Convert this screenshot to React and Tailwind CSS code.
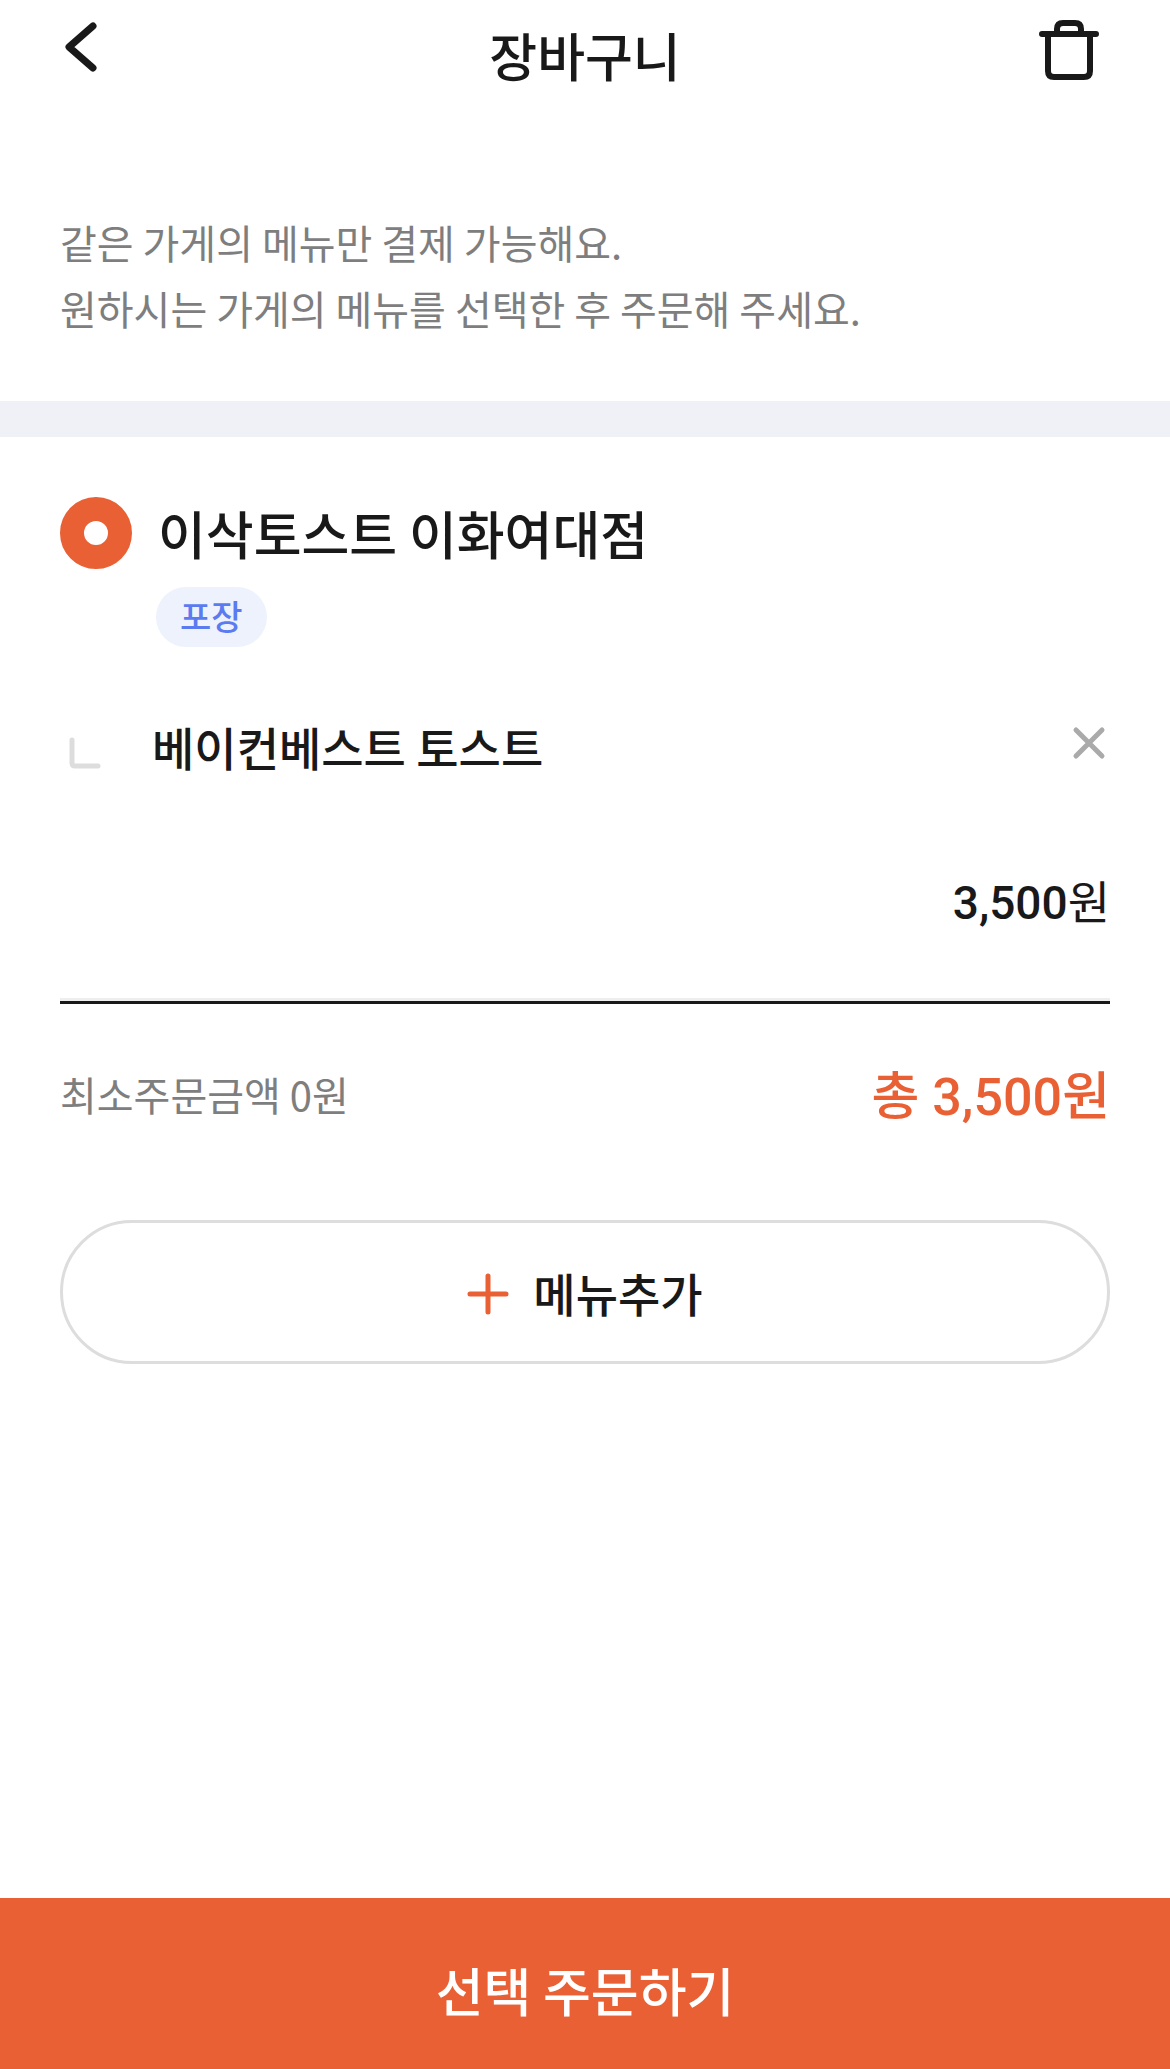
import React from 'react';

function BackIcon() {
  return (
    <svg viewBox="0 0 44 56" className="h-14 w-11" fill="none" stroke="currentColor" strokeWidth="7" strokeLinecap="round" strokeLinejoin="round">
      <path d="M33 6L9 27L33 48" />
    </svg>
  );
}

function TrashIcon() {
  return (
    <svg viewBox="0 0 60 64" className="h-16 w-15 shrink-0" fill="none" stroke="currentColor" strokeWidth="6" strokeLinecap="round" strokeLinejoin="round">
      <path d="M3 18H57M9 18V55Q9 61 15 61H45Q51 61 51 55V18M18 17V13Q18 7 24 7H36Q42 7 42 13V17" />
    </svg>
  );
}

function BranchIcon() {
  return (
    <svg viewBox="0 0 72 72" className="h-18 w-18 shrink-0" fill="none" stroke="#dddddd" strokeWidth="5" strokeLinecap="round" strokeLinejoin="round">
      <path d="M12 28V51Q12 54 15 54H38" />
    </svg>
  );
}

function CloseIcon() {
  return (
    <svg viewBox="0 0 72 72" className="h-18 w-18" fill="none" stroke="#aaaaaa" strokeWidth="5" strokeLinecap="round">
      <path d="M38 18L64 44M64 18L38 44" />
    </svg>
  );
}

function PlusIcon() {
  return (
    <svg viewBox="0 0 42 42" className="h-[42px] w-[42px]" fill="none" stroke="#e86034" strokeWidth="5" strokeLinecap="round">
      <path d="M21 3V39M3 21H39" />
    </svg>
  );
}

export default function App() {
  return (
    <div className="flex min-h-screen flex-col bg-white font-['Noto_Sans_CJK_KR',sans-serif] text-[#191919]">
      <header className="flex items-start justify-between px-15 pt-4">
        <button type="button" aria-label="뒤로" className="flex h-16 w-[82px] items-center">
          <BackIcon />
        </button>
        <h1 className="text-[52px] font-medium leading-[78px]">장바구니</h1>
        <button type="button" aria-label="장바구니 비우기" className="flex h-16 w-[82px] items-center justify-center">
          <TrashIcon />
        </button>
      </header>
      <p className="px-15 pt-[115px] pb-15 text-[40px] leading-[66px] text-[#7e7e7e]">
        같은 가게의 메뉴만 결제 가능해요.
        <br />
        원하시는 가게의 메뉴를 선택한 후 주문해 주세요.
      </p>
      <div className="h-9 bg-[#f0f1f7]" />
      <main className="flex-1 px-15 py-15">
        <label className="flex items-center gap-[26px]">
          <input type="radio" name="store" defaultChecked className="h-18 w-18 appearance-none rounded-full border-[24px] border-[#e86034] bg-white" />
          <span className="text-[52px] font-medium leading-[72px]">이삭토스트 이화여대점</span>
        </label>
        <div className="mt-[18px] ml-24 flex h-15 w-fit items-center rounded-full bg-[#edf2fd] px-6 pb-1 text-[34px] font-medium text-[#5b7bf0]">포장</div>

        <div className="mt-[65px] flex items-center gap-5">
          <BranchIcon />
          <h2 className="flex-1 pb-1 text-[46px] font-medium leading-[68px]">베이컨베스트 토스트</h2>
          <button type="button" aria-label="삭제">
            <CloseIcon />
          </button>
        </div>
        <p className="mt-[83px] text-right font-[Roboto,'Noto_Sans_CJK_KR',sans-serif] text-[46px] font-medium leading-[72px]">
          3,500<span className="font-normal">원</span>
        </p>
        <hr className="mt-[59px] h-[6px] border-t-3 border-[#eeeeee] bg-[#191919]" />
        <div className="mt-14 flex items-center justify-between">
          <span className="pb-1 text-[40px] leading-[68px] text-[#7e7e7e]">최소주문금액 0원</span>
          <strong className="pt-1 font-[Roboto,'Noto_Sans_CJK_KR',sans-serif] text-[52px] font-medium leading-[68px] text-[#e86034]">총 3,500원</strong>
        </div>
        <button type="button" className="mt-[88px] flex h-36 w-full items-center justify-center gap-6 rounded-full border-3 border-[#dddddd] pt-1 text-[46px] font-medium">
          <PlusIcon />
          <span className="pb-1">메뉴추가</span>
        </button>
      </main>
      <button type="button" className="h-[171px] bg-[#e86034] pt-3 text-[52px] font-medium text-white">선택 주문하기</button>
    </div>
  );
}
